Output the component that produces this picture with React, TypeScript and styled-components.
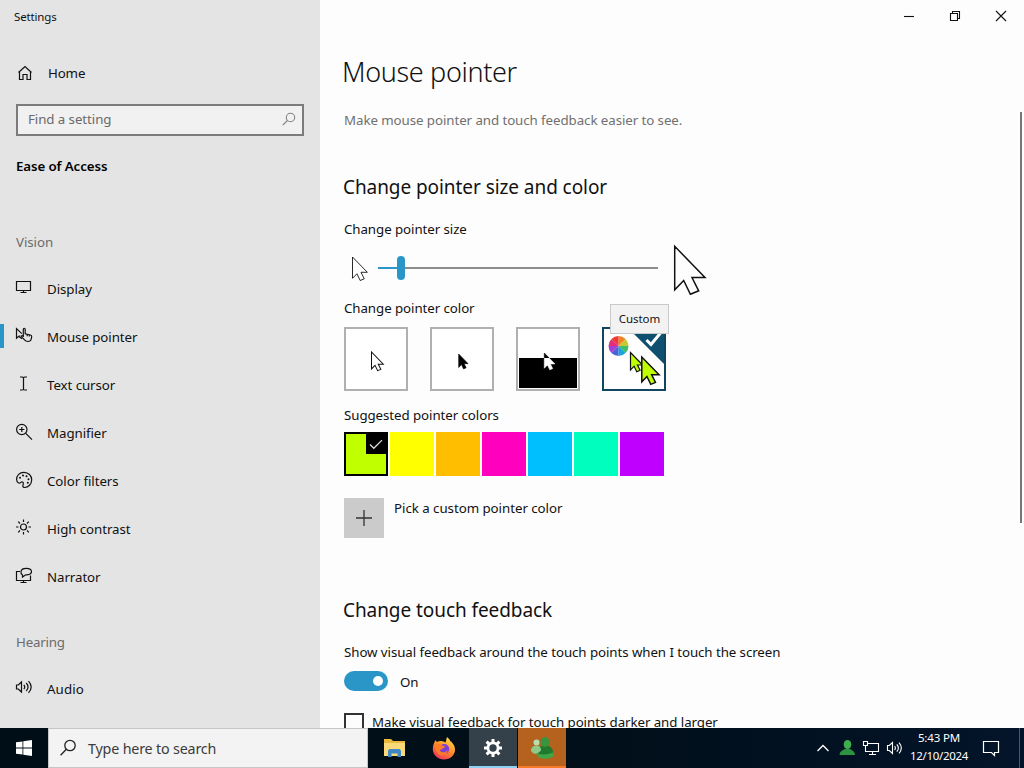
import { ReactNode } from 'react';
import styled, { createGlobalStyle } from 'styled-components';

const GlobalStyle = createGlobalStyle`
  * {
    box-sizing: border-box;
  }

  body {
    margin: 0;
    overflow: hidden;
    background: #fdfdfd;
    color: #111;
    font-family: 'Noto Sans', 'Open Sans', sans-serif;
    font-size: 13.3px;
  }

  svg {
    display: block;
    flex-shrink: 0;
  }
`;

const Screen = styled.div`
  display: flex;
  flex-direction: column;
  width: 1024px;
  height: 768px;
  overflow: hidden;
`;

const SettingsWindow = styled.div`
  display: flex;
  height: 728px;
  overflow: hidden;
`;

const Text = styled.span<{ $spacing?: number }>`
  white-space: nowrap;
  letter-spacing: ${(props) => props.$spacing ?? -0.07}px;
`;

/* Sidebar */

const Sidebar = styled.nav`
  display: flex;
  flex-direction: column;
  width: 320px;
  background: #e4e4e4;
`;

const WindowTitle = styled.div`
  height: 32px;
  padding: 0 14px;
  line-height: 33px;
  font-size: 11.5px;
`;

const HomeLink = styled.div`
  display: flex;
  align-items: center;
  gap: 15px;
  height: 48px;
  margin-top: 17px;
  padding-left: 17px;
`;

const SearchBox = styled.div`
  display: flex;
  align-items: center;
  justify-content: space-between;
  height: 32px;
  margin: 7px 16px 0;
  padding: 0 6px 2px 10px;
  border: 2px solid #7b7b7b;
  background: #f1f1f1;
  color: #6a6a6a;
`;

const Category = styled.div`
  height: 20px;
  margin: 20px 16px 0;
  line-height: 20px;
  font-weight: 600;
  color: #000;
`;

const GroupTitle = styled.div<{ $top: number }>`
  height: 20px;
  margin: ${(props) => props.$top}px 16px 13px;
  line-height: 20px;
  color: #6b6b6b;
`;

const NavItem = styled.div<{ $active?: boolean }>`
  display: flex;
  align-items: center;
  height: 48px;
  color: #111;

  &::before {
    content: '';
    width: 4px;
    height: 24px;
    margin-top: -2px;
    background: ${(props) => (props.$active ? '#2a96c8' : 'transparent')};
  }

  svg {
    margin: -2px 14px 0 11px;
  }
`;

/* Main page */

const Page = styled.main`
  display: flex;
  flex: 1;
  flex-direction: column;
  background: #fdfdfd;
`;

const TitleBar = styled.div`
  display: flex;
  justify-content: flex-end;
  height: 32px;
`;

const CaptionButton = styled.div`
  display: flex;
  align-items: center;
  justify-content: center;
  width: 46px;
  height: 32px;
`;

const PageBody = styled.div`
  display: flex;
  justify-content: space-between;
  height: 696px;
  overflow: hidden;
`;

const Content = styled.div`
  display: flex;
  flex-direction: column;
  width: 560px;
  padding-left: 24px;

  & > * {
    flex-shrink: 0;
  }
`;

const ScrollThumb = styled.div`
  width: 2px;
  height: 411px;
  margin: 80px 2px 0 0;
  background: #777;
`;

const PageTitle = styled.h1`
  height: 40px;
  margin: 20px 0 0 -2px;
  line-height: 40px;
  font-size: 27px;
  font-weight: 300;
`;

const Description = styled.p`
  height: 20px;
  margin: 18px 0 0;
  line-height: 20px;
  color: #707070;
`;

const SectionTitle = styled.h2<{ $top: number }>`
  height: 28px;
  margin: ${(props) => props.$top}px 0 0 -1px;
  line-height: 28px;
  font-size: 19px;
  font-weight: 400;
`;

const Label = styled.div<{ $top: number }>`
  height: 20px;
  margin-top: ${(props) => props.$top}px;
  line-height: 20px;
`;

const SliderRow = styled.div`
  display: flex;
  align-items: center;
  height: 58px;
  padding-left: 7px;
`;

const Track = styled.div`
  display: flex;
  align-items: center;
  width: 280px;
  height: 24px;
  margin: 0 14px 0 9px;
`;

const TrackPart = styled.div<{ $width: number; $filled?: boolean }>`
  width: ${(props) => props.$width}px;
  height: 2px;
  background: ${(props) => (props.$filled ? '#2a96c8' : '#8c8c8c')};
`;

const Thumb = styled.div`
  width: 8px;
  height: 24px;
  border-radius: 4px;
  background: #2a96c8;
`;

const PointerOptions = styled.div`
  display: flex;
  gap: 22px;
  margin-top: 9px;
`;

const PointerOption = styled.div<{ $selected?: boolean }>`
  position: relative;
  width: 64px;
  height: 64px;
  border: 2px solid ${(props) => (props.$selected ? '#10465f' : '#b0b0b0')};
  background: #fff;
`;

const Tooltip = styled.div`
  position: absolute;
  top: -25px;
  left: 6px;
  width: 59px;
  height: 30px;
  border: 1px solid #c9c9c9;
  background: #f2f2f2;
  line-height: 28px;
  text-align: center;
  font-size: 11.5px;
`;

const Swatches = styled.div`
  display: flex;
  gap: 2px;
  margin-top: 7px;
`;

const Swatch = styled.div<{ $color: string; $selected?: boolean }>`
  display: flex;
  justify-content: flex-end;
  width: 44px;
  height: 44px;
  border: ${(props) => (props.$selected ? '2px solid #000' : 'none')};
  background: ${(props) => props.$color};
`;

const SwatchCheck = styled.div`
  width: 20px;
  height: 20px;
  background: #000;
`;

const CustomColor = styled.div`
  display: flex;
  gap: 10px;
  margin-top: 22px;
  line-height: 20px;
`;

const AddButton = styled.div`
  display: flex;
  align-items: center;
  justify-content: center;
  width: 40px;
  height: 40px;
  background: #cbcbcb;
`;

const ToggleRow = styled.div`
  display: flex;
  align-items: center;
  gap: 12px;
  height: 20px;
  margin-top: 9px;
`;

const Toggle = styled.div`
  display: flex;
  align-items: center;
  justify-content: flex-end;
  width: 44px;
  height: 20px;
  padding-right: 5px;
  border-radius: 10px;
  background: #2a96c8;

  &::after {
    content: '';
    width: 10px;
    height: 10px;
    border-radius: 50%;
    background: #fff;
  }
`;

const ToggleState = styled.div`
  padding-top: 2px;
`;

const CheckboxRow = styled.div`
  display: flex;
  align-items: flex-start;
  gap: 8px;
  height: 20px;
  margin-top: 22px;
  line-height: 18px;
`;

const Checkbox = styled.div`
  width: 20px;
  height: 20px;
  border: 2px solid #333;
`;

/* Taskbar */

const Taskbar = styled.footer`
  display: flex;
  height: 40px;
  background: linear-gradient(90deg, #000f17 0%, #000f19 60%, #04142a 100%);
  color: #fff;
`;

const StartButton = styled.div`
  display: flex;
  align-items: center;
  justify-content: center;
  width: 48px;
`;

const TaskbarSearch = styled.div`
  display: flex;
  align-items: center;
  gap: 12px;
  width: 320px;
  padding-left: 11px;
  border: 1px solid #c4c6c7;
  background: #f3f3f3;
  color: #3c3c3c;
  font-size: 14.3px;
`;

const TaskButtons = styled.div`
  display: flex;
  flex: 1;
  padding-left: 3px;
`;

const TaskButton = styled.div<{ $background?: string; $line?: string }>`
  display: flex;
  align-items: center;
  justify-content: center;
  width: 48px;
  margin-right: 1px;
  background: ${(props) => props.$background ?? 'transparent'};
  box-shadow: ${(props) => (props.$line ? `inset 0 -2px ${props.$line}` : 'none')};
`;

const Tray = styled.div`
  display: flex;
  align-items: center;
  gap: 6px;
`;

const Clock = styled.div`
  width: 60px;
  padding-bottom: 2px;
  line-height: 18px;
  text-align: center;
  font-size: 11.5px;
`;

const ActionCenter = styled.div`
  display: flex;
  align-items: center;
  justify-content: center;
  width: 38px;
  height: 40px;
  padding-right: 6px;
`;

const ShowDesktop = styled.div`
  width: 5px;
  height: 40px;
  border-left: 1px solid #4c5763;
`;

const ARROW = 'M0 0V43.5L9 34.2L15.7 48L24 44.5L17.3 31.2H30.3Z';

type ArrowProps = {
  x: number;
  y: number;
  scale: number;
  fill?: string;
  stroke?: string;
  strokeWidth?: number;
};

function Arrow({ x, y, scale, fill = '#fff', stroke = '#111', strokeWidth = 1 }: ArrowProps) {
  return (
    <path
      d={ARROW}
      transform={`translate(${x} ${y}) scale(${scale})`}
      fill={fill}
      stroke={stroke}
      strokeWidth={strokeWidth / scale}
    />
  );
}

type IconProps = {
  width?: number;
  height?: number;
  color?: string;
  line?: number;
  children: ReactNode;
};

function Icon({ width = 18, height = 18, color = '#111', line = 1.1, children }: IconProps) {
  return (
    <svg
      width={width}
      height={height}
      viewBox={`0 0 ${width} ${height}`}
      fill="none"
      stroke={color}
      strokeWidth={line}
    >
      {children}
    </svg>
  );
}

const navIcons = {
  display: (
    <Icon line={1.2}>
      <path d="M1.5 2.5h14v9h-14zM8.5 11.5v2M5.5 13.5h6" />
    </Icon>
  ),
  pointer: (
    <Icon line={1.2}>
      <path d="M6.8 6.6 1.5 1.6v9.6l2.3-2 3 2.6M3.8 9.2l1.6-.2" />
      <path d="M8.3 10V2.2c0-1.3 1.9-1.3 1.9 0v4.6l5.2 1.2c.9.2 1.4.8 1.3 1.6l-.5 2.6c-.4 1.7-1.5 2.3-3.3 2.3-1.8 0-2.7-.7-3.6-1.8L6.6 9.8c-.6-1 .5-1.7 1.7-.6M12.2 7.3v2M14.3 7.8v1.8" />
    </Icon>
  ),
  text: (
    <Icon line={1.2}>
      <path d="M5 2h2.2l1.3.5 1.3-.5H12M5 15h2.2l1.3-.5 1.3.5H12M8.5 2.500v12" />
    </Icon>
  ),
  magnifier: (
    <Icon line={1.2}>
      <circle cx="6.8" cy="6.5" r="5.2" />
      <path d="M10.5 10.2 17 16.7M6.8 3.9v5.2M4.2 6.5h5.2" />
    </Icon>
  ),
  palette: (
    <Icon line={1.2}>
      <path d="M1.6 8.8C1.3 4.5 4.8 1.2 9 1.3c4.3.1 7.7 3.3 7.7 7.4 0 4.4-3.4 7.8-6.9 7.8-1.6 0-2.2-1-1.9-2.2l.4-1.7c.3-1.5-1.3-2.2-2.4-1.2-1.7 1.6-4 .4-4.3-2.6Z" />
      <path
        d="M5 6.7h.01M8 4.4h.01M11.5 5.2h.01M13.5 8.2h.01M12.8 11.8h.01"
        strokeWidth="2"
        strokeLinecap="round"
      />
    </Icon>
  ),
  contrast: (
    <Icon line={1.2}>
      <circle cx="8.5" cy="8" r="3" />
      <path d="M8.5.5V3M8.5 13v2.500M1 8h2.500M13.500 8H16M3.200 2.700 5 4.500M12 11.500l1.800 1.800M13.800 2.700 12 4.500M5 11.500l-1.800 1.800" />
    </Icon>
  ),
  narrator: (
    <Icon line={1.2}>
      <path d="M5 4.500H1.500v9h14V8.500M8.500 13.500v2M5.500 15.500h6" />
      <path d="M7.5 8C6.1 7 5.7 5.700 6 4.300c.4-1.900 2.600-3 5.200-3s5.300 1.100 5.300 3.300-2 3.200-4.500 3.200h-1.300L7.500 10Z" />
    </Icon>
  ),
  audio: (
    <Icon line={1.2}>
      <path d="M1.5 6h1.8L6.5 3v10L3.3 10H1.5ZM8.8 5.800c1.200 1.400 1.200 3 0 4.400M11.200 4c2.300 2.500 2.300 5.500 0 8M13.500 2.100c3.400 3.700 3.400 8 0 11.800" />
    </Icon>
  ),
};

const visionItems = [
  { label: 'Display', icon: navIcons.display },
  { label: 'Mouse pointer', icon: navIcons.pointer, active: true },
  { label: 'Text cursor', icon: navIcons.text },
  { label: 'Magnifier', icon: navIcons.magnifier },
  { label: 'Color filters', icon: navIcons.palette },
  { label: 'High contrast', icon: navIcons.contrast },
  { label: 'Narrator', icon: navIcons.narrator },
];

const pointerColors = ['#bfff00', '#ffff00', '#ffbf00', '#ff00bf', '#00bfff', '#00ffbf', '#bf00ff'];

const wheelColors = ['#f58220', '#c9c832', '#3fbf6a', '#16a6d9', '#4a63d8', '#a43fd0', '#e0307d', '#ee3a34'];

function ColorWheel({ cx, cy, r }: { cx: number; cy: number; r: number }) {
  const point = (index: number) => {
    const angle = ((index * 45 - 90) * Math.PI) / 180;
    return `${cx + r * Math.cos(angle)} ${cy + r * Math.sin(angle)}`;
  };
  return (
    <>
      {wheelColors.map((color, index) => (
        <path
          key={color}
          d={`M${cx} ${cy}L${point(index)}A${r} ${r} 0 0 1 ${point(index + 1)}Z`}
          fill={color}
        />
      ))}
    </>
  );
}

function SidebarPanel() {
  return (
    <Sidebar>
      <WindowTitle>
        <Text $spacing={-0.15}>Settings</Text>
      </WindowTitle>
      <HomeLink>
        <Icon width={16} height={16} line={1.2}>
          <path d="M1.5 7.5 8 1.5l6.5 6M2.5 6.8v7.7H6v-5h4v5h3.5V6.8" />
        </Icon>
        <Text $spacing={-0.15}>Home</Text>
      </HomeLink>
      <SearchBox>
        <Text>Find a setting</Text>
        <Icon width={14} height={14} color="#808080">
          <circle cx="8.5" cy="5.5" r="4.2" />
          <path d="M5.400 8.500.8 13.200" />
        </Icon>
      </SearchBox>
      <Category>
        <Text $spacing={-0.1}>Ease of Access</Text>
      </Category>
      <GroupTitle $top={56}>
        <Text>Vision</Text>
      </GroupTitle>
      {visionItems.map((item) => (
        <NavItem key={item.label} $active={item.active}>
          {item.icon}
          <Text>{item.label}</Text>
        </NavItem>
      ))}
      <GroupTitle $top={31}>
        <Text $spacing={-0.2}>Hearing</Text>
      </GroupTitle>
      <NavItem>
        {navIcons.audio}
        <Text $spacing={0.1}>Audio</Text>
      </NavItem>
    </Sidebar>
  );
}

function PointerSection() {
  return (
    <>
      <SectionTitle $top={43}>
        <Text>Change pointer size and color</Text>
      </SectionTitle>
      <Label $top={18}>
        <Text>Change pointer size</Text>
      </Label>
      <SliderRow>
        <Icon width={18} height={26}>
          <Arrow x={1.5} y={2} scale={0.49} strokeWidth={0.9} />
        </Icon>
        <Track>
          <TrackPart $width={19} $filled />
          <Thumb />
          <TrackPart $width={253} />
        </Track>
        <Icon width={36} height={54}>
          <Arrow x={2.7} y={5.3} scale={1} fill="#fdfdfd" strokeWidth={1.5} />
        </Icon>
      </SliderRow>
      <Label $top={1}>
        <Text>Change pointer color</Text>
      </Label>
      <PointerOptions>
        <PointerOption>
          <Icon width={60} height={60}>
            <Arrow x={25.5} y={23} scale={0.39} />
          </Icon>
        </PointerOption>
        <PointerOption>
          <Icon width={60} height={60}>
            <Arrow x={26.7} y={25} scale={0.31} fill="#000" stroke="#000" strokeWidth={0.6} />
          </Icon>
        </PointerOption>
        <PointerOption>
          <Icon width={60} height={60}>
            <clipPath id="upper">
              <path d="M0 0h60v29H0z" />
            </clipPath>
            <path d="M1 29h58v30H1z" fill="#000" stroke="none" />
            <Arrow x={26.3} y={24} scale={0.35} fill="#fff" stroke="#fff" strokeWidth={0.6} />
            <g clipPath="url(#upper)">
              <Arrow x={26.3} y={24} scale={0.35} fill="#000" stroke="#000" strokeWidth={0.6} />
            </g>
          </Icon>
        </PointerOption>
        <PointerOption $selected>
          <Icon width={60} height={60}>
            <path d="M25 0H60V35Z" fill="#10506f" stroke="none" />
            <path d="m42.5 11 4.5 4.500L56.500 4" stroke="#fff" strokeWidth="3" />
            <g stroke="none">
              <ColorWheel cx={14.5} cy={17} r={10} />
            </g>
            <Arrow x={26.5} y={23.5} scale={0.4} fill="#bfff00" strokeWidth={1.2} />
            <Arrow x={37.8} y={28} scale={0.57} fill="#bfff00" strokeWidth={1.5} />
          </Icon>
          <Tooltip>
            <Text>Custom</Text>
          </Tooltip>
        </PointerOption>
      </PointerOptions>
      <Label $top={14}>
        <Text>Suggested pointer colors</Text>
      </Label>
      <Swatches>
        {pointerColors.map((color, index) => (
          <Swatch key={color} $color={color} $selected={index === 0}>
            {index === 0 && (
              <SwatchCheck>
                <Icon width={20} height={20} color="#ddd" line={1.3}>
                  <path d="m4 10.500 3.800 3.800 8.200-8.200" />
                </Icon>
              </SwatchCheck>
            )}
          </Swatch>
        ))}
      </Swatches>
      <CustomColor>
        <AddButton>
          <Icon width={18} height={18} color="#333" line={1.3}>
            <path d="M9 1v16M1 9h16" />
          </Icon>
        </AddButton>
        <Text $spacing={-0.04}>Pick a custom pointer color</Text>
      </CustomColor>
    </>
  );
}

function TouchSection() {
  return (
    <>
      <SectionTitle $top={58}>
        <Text>Change touch feedback</Text>
      </SectionTitle>
      <Label $top={18}>
        <Text>Show visual feedback around the touch points when I touch the screen</Text>
      </Label>
      <ToggleRow>
        <Toggle />
        <ToggleState>
          <Text>On</Text>
        </ToggleState>
      </ToggleRow>
      <CheckboxRow>
        <Checkbox />
        <Text>Make visual feedback for touch points darker and larger</Text>
      </CheckboxRow>
    </>
  );
}

function TaskbarPanel() {
  return (
    <Taskbar>
      <StartButton>
        <svg width="16" height="16" viewBox="0 0 16 16" fill="#fff">
          <path d="M0 2.300 6.500 1.400v6.200H0ZM7.300 1.300 16 0v7.600H7.300ZM0 8.400h6.500v6.200L0 13.700ZM7.300 8.400H16V16l-8.700-1.300Z" />
        </svg>
      </StartButton>
      <TaskbarSearch>
        <Icon width={16} height={18} color="#222" line={1.3}>
          <circle cx="10" cy="6.5" r="5.2" />
          <path d="M6.300 10.300.6 16.300" />
        </Icon>
        <Text $spacing={-0.18}>Type here to search</Text>
      </TaskbarSearch>
      <TaskButtons>
        <TaskButton>
          <svg width="22" height="20" viewBox="0 0 22 20">
            <path d="M0 1h7l2 2h12v14H0Z" fill="#e9b93c" />
            <path d="M0 5h21v13H0Z" fill="#f9d978" />
            <path d="M4 19v-6.500L5.500 11h10l1.500 1.500V19h-3.500v-3.500h-6V19Z" fill="#3f88c5" />
          </svg>
        </TaskButton>
        <TaskButton>
          <svg width="24" height="24" viewBox="0 0 24 24">
            <defs>
              <linearGradient id="fire" x1="0.8" y1="0" x2="0.2" y2="1">
                <stop offset="0" stopColor="#ffe14a" />
                <stop offset="0.45" stopColor="#ff9326" />
                <stop offset="1" stopColor="#f02b62" />
              </linearGradient>
            </defs>
            <path
              d="M15 1c2 1.500 3 3 3.500 4.500 1-.3 1 .5 1.800 1.500C22 9 23 11 23 13.500 23 19.500 18 23.500 12 23.500S.8 19 .8 13c0-3.500 1-6.500 3-9 .3 1 .6 1.600 1.200 2 1.500-1 3-1.300 4.500-1 1.500.2 3 .6 4 1.500.7-1.500.7-3.500 1.500-5.500Z"
              fill="url(#fire)"
            />
            <circle cx="12.2" cy="13" r="5" fill="#7a3fd8" />
            <path
              d="M3.500 9c2-2 5-1.500 7 .8l3 .4c-.4 1.300-2 1.500-3 2.300-.7 1.200-2 1.600-3 1.200 1 3 6 3.800 8 .3-.2 4-4 6-7.500 5C4.500 18 3 13 3.500 9Z"
              fill="#ff7b28"
            />
          </svg>
        </TaskButton>
        <TaskButton $background="#34414a" $line="#8ed0f2">
          <svg width="20" height="20" viewBox="0 0 20 20">
            <path
              d="M10 1v18M1 10h18M3.600 3.600l12.800 12.800M16.400 3.600 3.600 16.400"
              stroke="#fff"
              strokeWidth="3"
            />
            <circle cx="10" cy="10" r="6.5" fill="#fff" />
            <circle cx="10" cy="10" r="3.7" fill="#34414a" />
          </svg>
        </TaskButton>
        <TaskButton $background="#b5621f" $line="#f57b28">
          <svg width="26" height="24" viewBox="0 0 26 24">
            <path d="M8 18c-.5-4 1.500-7 5-8.500h6c3.500 1.500 5.500 4.500 5 8.500-1 3-14 3.500-16 0Z" fill="#1f7a2e" />
            <ellipse cx="16" cy="6" rx="4.500" ry="5" fill="#37943f" />
            <circle cx="7.5" cy="6.5" r="3" fill="#b9dfae" />
            <path d="M2 15c-.3-3 2-5.500 5.500-5.500S12 12 12 14.500L8 18c-2.500 0-5-1-6-3Z" fill="#8fca87" />
            <path d="M7 17c4 2 12 2 16.500-.5 1.500 1 1.500 3 .5 4-4 3-12 3-15 0Z" fill="#3fa648" />
          </svg>
        </TaskButton>
      </TaskButtons>
      <Tray>
        <Icon width={16} height={18} color="#fff" line={1.3}>
          <path d="M1.500 12 7 6.500l5.500 5.500" />
        </Icon>
        <svg width="18" height="18" viewBox="0 0 18 18">
          <ellipse cx="9.5" cy="5.5" rx="3.8" ry="4.5" fill="#3fae4e" />
          <path d="M1.500 16c0-3 2-4.500 5.500-6h5c3 1.500 5 3 5 6Z" fill="#2c9440" />
        </svg>
        <Icon width={18} height={18} color="#fff">
          <path d="M5.500 4.500h11v8h-11M10.500 12.500v3M7 15.500h7M1.500 2.500h4v4h-4zM3.500 6.500v6h2" />
        </Icon>
        <Icon color="#fff" width={17}>
          <path d="M1.500 6.500h1.800L6.500 3.500v11L3.300 11.500H1.500ZM8.600 7c1 1.300 1 2.700 0 4M10.800 5.300c2 2.300 2 5 0 7.400M13 3.600c3 3.500 3 7.300 0 10.800" />
        </Icon>
        <Clock>
          <Text $spacing={-0.15}>5:43 PM</Text>
          <br />
          <Text $spacing={-0.3}>12/10/2024</Text>
        </Clock>
        <ActionCenter>
          <Icon width={18} height={18} color="#fff" line={1.2}>
            <path d="M1.500 2.500h15v11h-4v3l-3-3h-8z" />
          </Icon>
        </ActionCenter>
        <ShowDesktop />
      </Tray>
    </Taskbar>
  );
}

export default function App() {
  return (
    <Screen>
      <GlobalStyle />
      <SettingsWindow>
        <SidebarPanel />
        <Page>
          <TitleBar>
            <CaptionButton>
              <Icon width={12} height={12}>
                <path d="M1 6.500h10" />
              </Icon>
            </CaptionButton>
            <CaptionButton>
              <Icon width={12} height={12}>
                <path d="M1.500 3.500h7v7h-7zM3.500 3.500v-2h7v7h-2" />
              </Icon>
            </CaptionButton>
            <CaptionButton>
              <Icon width={12} height={12}>
                <path d="M1 1l10 10M11 1 1 11" />
              </Icon>
            </CaptionButton>
          </TitleBar>
          <PageBody>
            <Content>
              <PageTitle>
                <Text $spacing={-0.35}>Mouse pointer</Text>
              </PageTitle>
              <Description>
                <Text>Make mouse pointer and touch feedback easier to see.</Text>
              </Description>
              <PointerSection />
              <TouchSection />
            </Content>
            <ScrollThumb />
          </PageBody>
        </Page>
      </SettingsWindow>
      <TaskbarPanel />
    </Screen>
  );
}
